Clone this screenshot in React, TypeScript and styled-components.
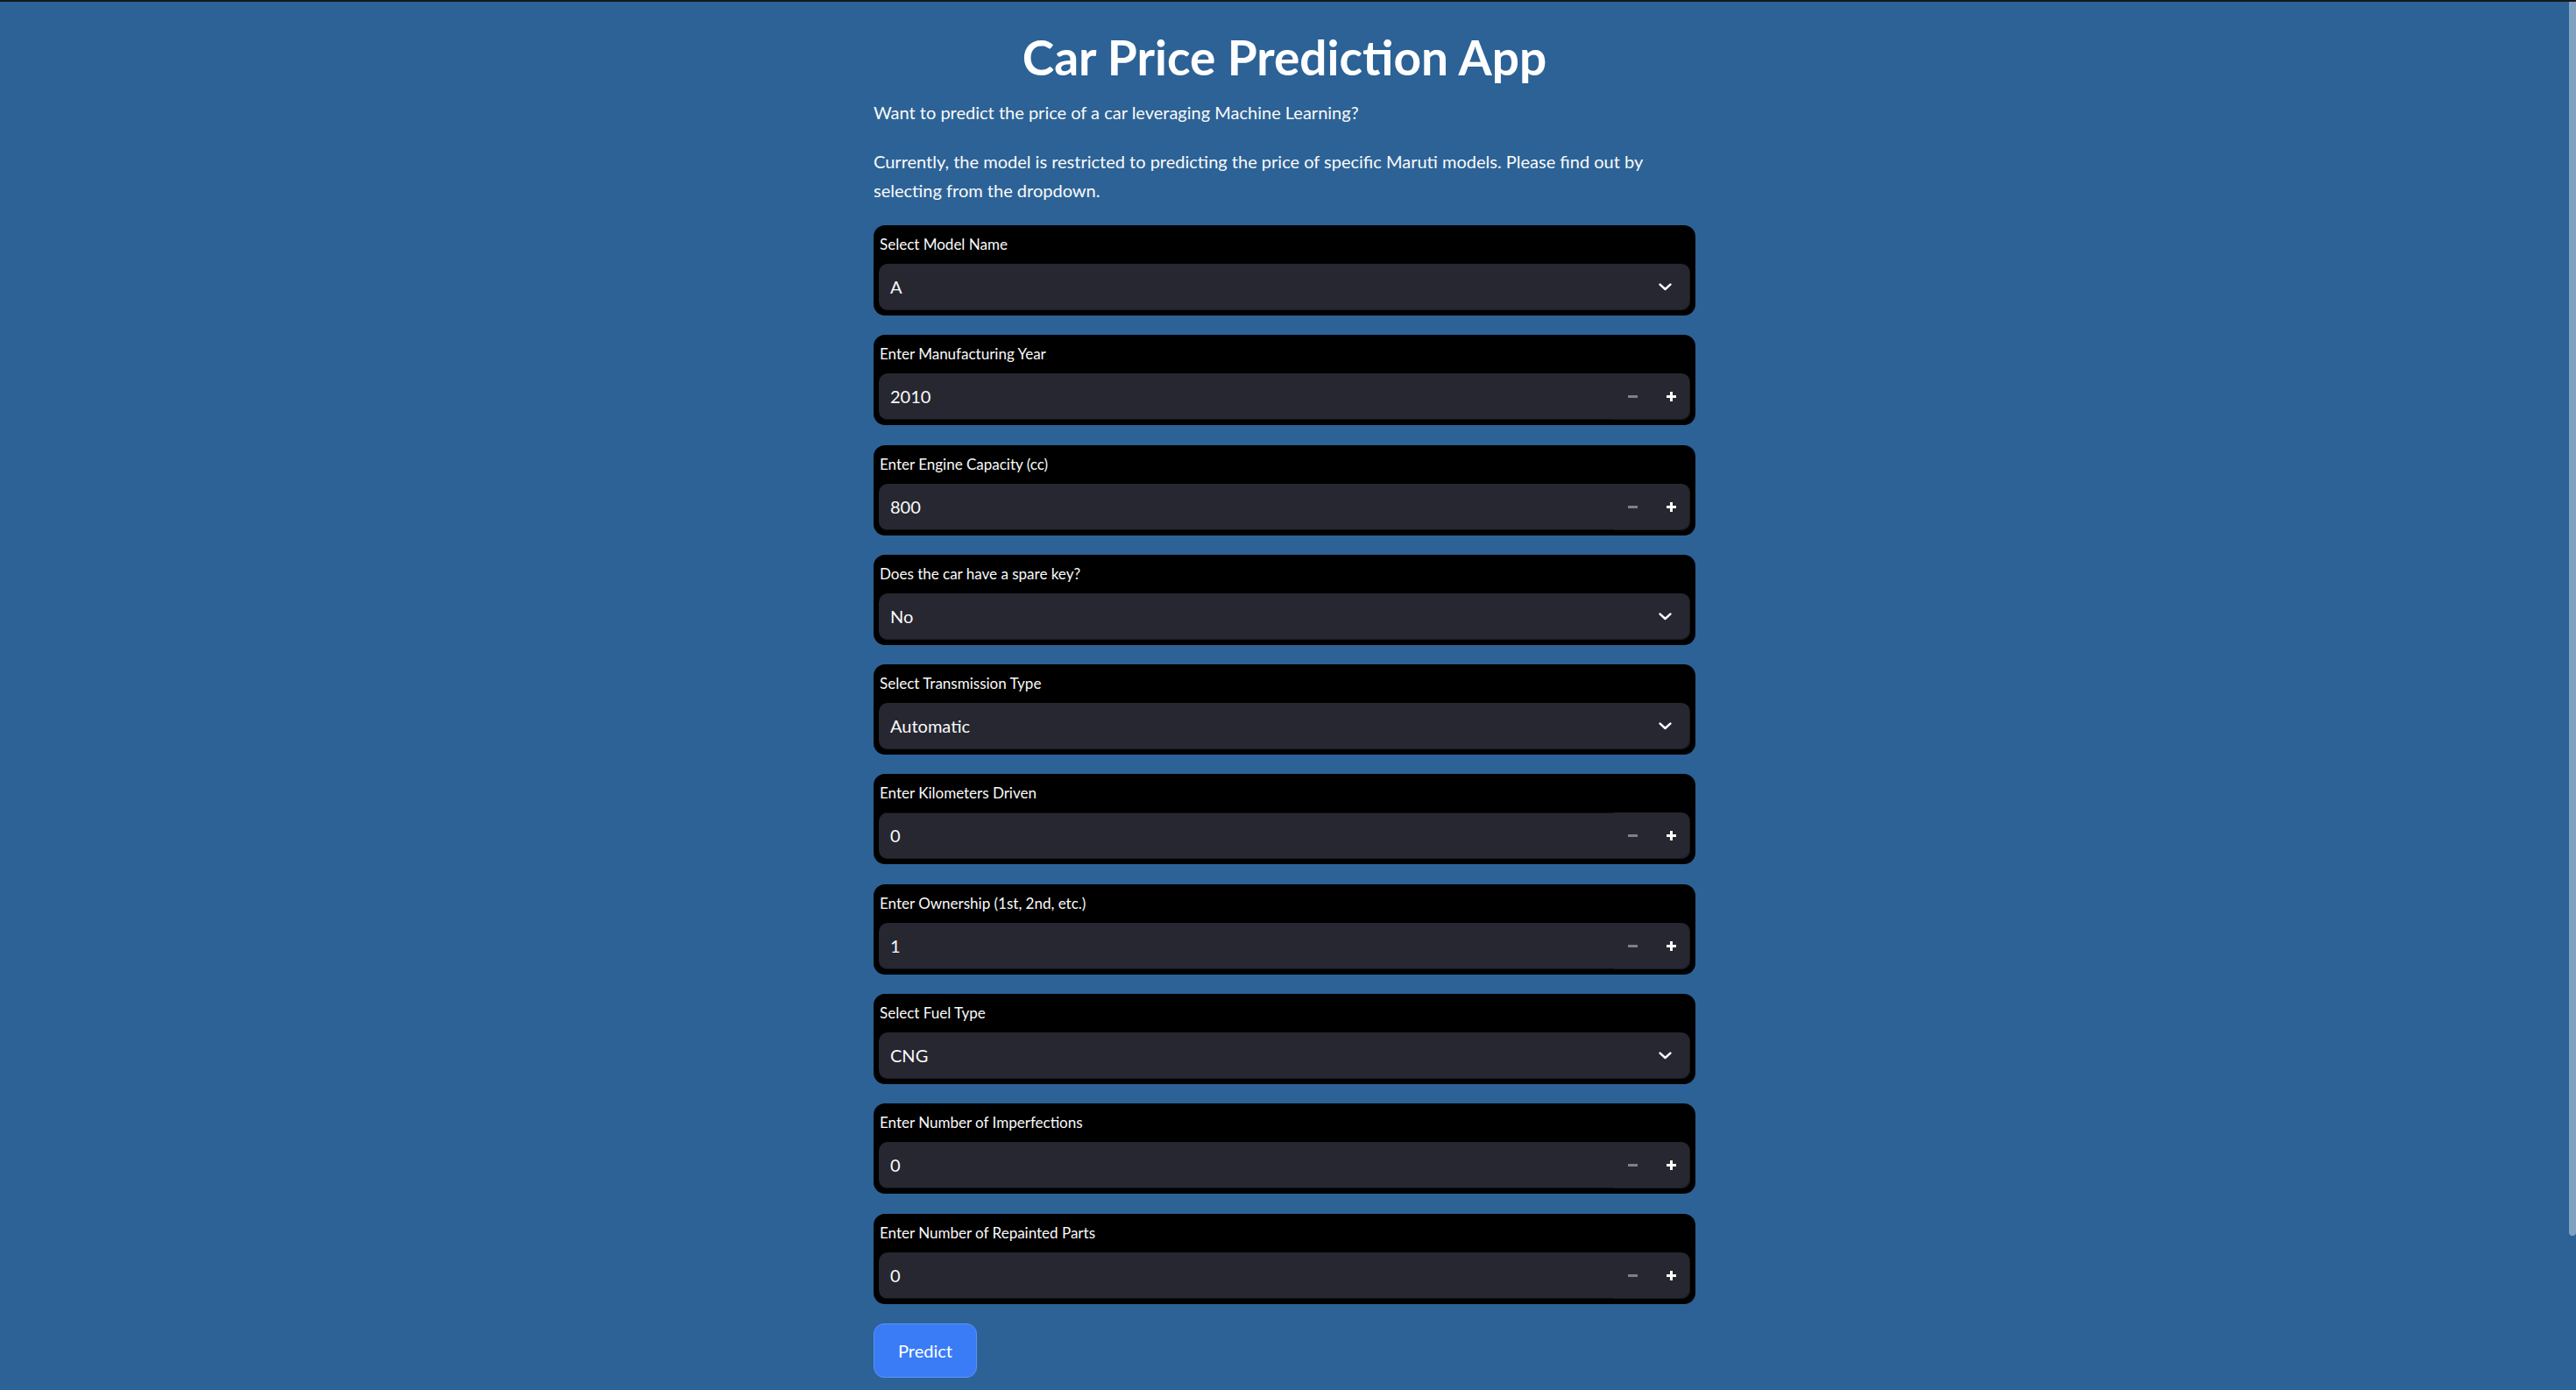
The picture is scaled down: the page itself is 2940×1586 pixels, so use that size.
import React from "react";
import styled, { createGlobalStyle } from "styled-components";

type Field =
    | { kind: "select"; label: string; value: string }
    | { kind: "number"; label: string; value: string; lineTop?: boolean };

const fields: Array<Field> = [
    { kind: "select", label: "Select Model Name", value: "A" },
    { kind: "number", label: "Enter Manufacturing Year", value: "2010" },
    { kind: "number", label: "Enter Engine Capacity (cc)", value: "800" },
    { kind: "select", label: "Does the car have a spare key?", value: "No" },
    { kind: "select", label: "Select Transmission Type", value: "Automatic" },
    { kind: "number", label: "Enter Kilometers Driven", value: "0", lineTop: true },
    { kind: "number", label: "Enter Ownership (1st, 2nd, etc.)", value: "1" },
    { kind: "select", label: "Select Fuel Type", value: "CNG" },
    { kind: "number", label: "Enter Number of Imperfections", value: "0" },
    { kind: "number", label: "Enter Number of Repainted Parts", value: "0" },
];

const GlobalStyle = createGlobalStyle`
  html, body {
    margin: 0;
    padding: 0;
    overflow: hidden;
    background: #2c6296;
  }
  * {
    box-sizing: border-box;
  }
`;

const Page = styled.div`
  display: flex;
  flex-direction: column;
  height: 100vh;
  background: #2c6296;
  font-family: Lato, "Liberation Sans", sans-serif;
  color: #fafafa;
`;

const TopBar = styled.div`
  height: 2px;
  flex-shrink: 0;
  background: #15171c;
`;

const Body = styled.div`
  display: flex;
  flex: 1;
  min-height: 0;
`;

const Main = styled.main`
  flex: 1;
  display: flex;
  justify-content: center;
  overflow: hidden;
`;

const ScrollTrack = styled.div`
  width: 8px;
  flex-shrink: 0;
`;

const ScrollThumb = styled.div`
  height: 1408px;
  background: #80a1c1;
  border-radius: 0 0 4px 4px;
`;

const Column = styled.div`
  width: 938px;
  padding-top: 30px;
  display: flex;
  flex-direction: column;
`;

const Title = styled.h1`
  margin: 0;
  font-size: 55px;
  line-height: 66px;
  font-weight: 700;
  text-align: center;
  color: #ffffff;
`;

const Text = styled.p<{ $top: number }>`
  margin: ${(p) => p.$top}px 0 0 0;
  font-size: 20px;
  line-height: 33px;
  color: #fafafa;
`;

const Cards = styled.div`
  display: flex;
  flex-direction: column;
  gap: 22.3px;
  margin-top: 23px;
`;

const Card = styled.div`
  background: #000;
  border-radius: 13px;
  padding: 10px 6px 6px 6px;
`;

const Label = styled.div`
  font-size: 17px;
  line-height: 24px;
  padding-left: 1px;
  margin-bottom: 10px;
  color: #fafafa;
`;

const Control = styled.div`
  display: flex;
  align-items: stretch;
  height: 53px;
  background: #262730;
  border-radius: 10px;
  overflow: hidden;
  box-shadow: inset -1px -1px 0 #1b1c23;
`;

const Value = styled.div<{ $lineTop?: boolean; $line?: boolean }>`
  flex: 1;
  display: flex;
  align-items: center;
  padding-left: 13px;
  font-size: 20px;
  line-height: 33px;
  color: #fafafa;
  border-top: 1px solid ${(p) => (p.$line && p.$lineTop ? "#101116" : "transparent")};
  border-bottom: 1px solid ${(p) => (p.$line && !p.$lineTop ? "#101116" : "transparent")};
`;

const Chevron = styled.div`
  width: 56px;
  display: flex;
  align-items: center;
  justify-content: flex-end;
  padding-right: 21px;
`;

const Step = styled.div<{ $muted?: boolean }>`
  width: 43.5px;
  display: flex;
  align-items: center;
  justify-content: center;
  color: ${(p) => (p.$muted ? "#7d808c" : "#ffffff")};
`;

const Button = styled.button`
  margin-top: 22px;
  width: 118px;
  height: 62px;
  border-radius: 12px;
  border: 1px solid #5b93f3;
  background: #3a7cf6;
  color: #ffffff;
  font-family: Lato, "Liberation Sans", sans-serif;
  font-size: 20px;
  padding: 0;
`;

const ChevronIcon = () => (
    <svg width="15" height="9" viewBox="0 0 15 9">
        <path d="M1.6 1.6 L7.5 7 L13.4 1.6" fill="none" stroke="#fafafa" strokeWidth="2.5" strokeLinecap="round" strokeLinejoin="round"/>
    </svg>
);

const MinusIcon = () => (
    <svg width="11" height="11" viewBox="0 0 11 11">
        <rect x="0" y="4" width="11" height="3" fill="currentColor"/>
    </svg>
);

const PlusIcon = () => (
    <svg width="11" height="11" viewBox="0 0 11 11">
        <rect x="0" y="4" width="11" height="3" fill="currentColor"/>
        <rect x="4" y="0" width="3" height="11" fill="currentColor"/>
    </svg>
);

const FieldCard = ({ field }: { field: Field }) => {
    return (
        <Card>
            <Label>{field.label}</Label>
            {field.kind === "select" ? (
                <Control>
                    <Value>{field.value}</Value>
                    <Chevron><ChevronIcon/></Chevron>
                </Control>
            ) : (
                <Control>
                    <Value $line $lineTop={field.lineTop}>{field.value}</Value>
                    <Step $muted><MinusIcon/></Step>
                    <Step><PlusIcon/></Step>
                </Control>
            )}
        </Card>
    );
};

export default function App() {
    return (
        <Page>
            <GlobalStyle/>
            <TopBar/>
            <Body>
                <Main>
                    <Column>
                        <Title>Car Price Prediction App</Title>
                        <Text $top={14}>Want to predict the price of a car leveraging Machine Learning?</Text>
                        <Text $top={23}>
                            Currently, the model is restricted to predicting the price of specific Maruti models. Please find out by selecting from the dropdown.
                        </Text>
                        <Cards>
                            {fields.map((f) => (
                                <FieldCard key={f.label} field={f}/>
                            ))}
                        </Cards>
                        <div>
                            <Button>Predict</Button>
                        </div>
                    </Column>
                </Main>
                <ScrollTrack>
                    <ScrollThumb/>
                </ScrollTrack>
            </Body>
        </Page>
    );
}
